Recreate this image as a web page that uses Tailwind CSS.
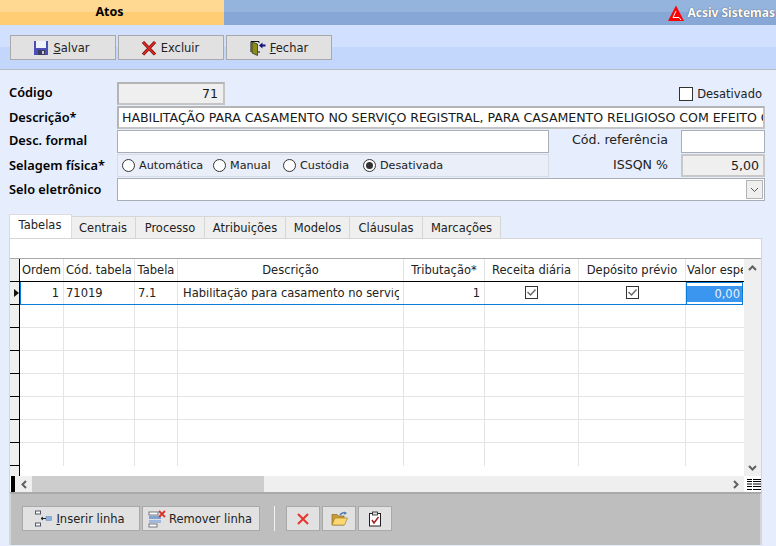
<!DOCTYPE html>
<html lang="pt"><head><meta charset="utf-8"><script src="https://cdn.jsdelivr.net/npm/@tailwindcss/browser@4"></script></head>
<body class="m-0 w-[776px] h-[546px] overflow-hidden bg-[#e6edfc] font-['DejaVu_Sans',sans-serif] text-[11.5px] leading-none text-[#1a1a1a]">
<!-- header -->
<div class="flex h-[25px]">
  <div class="w-[224px] h-full bg-[linear-gradient(#ffd992_0,#ffd992_12px,#ffcd74_12px)] flex items-center justify-center font-['Noto_Sans',sans-serif] font-bold text-[12.5px] text-black pr-[5px]">Atos</div>
  <div class="flex-1 h-full bg-[linear-gradient(#94b3dd_0,#94b3dd_12px,#87a7d7_12px)] flex items-center justify-end gap-[3px] pr-[1px]">
    <svg width="16" height="16" viewBox="0 0 16 16"><path d="M8 0.5 L16 16 L0 16 Z" fill="#f00"/><path d="M8 6 L5 12.5 L11 12.5 L13 15" fill="none" stroke="#fff" stroke-width="1"/></svg>
    <span class="font-['Noto_Sans',sans-serif] font-bold text-[12px] text-white [text-shadow:0_0_1px_#333]">Acsiv Sistemas</span>
  </div>
</div>
<!-- toolbar -->
<div class="h-[45px] border-b border-[#b7bcc6] bg-[linear-gradient(#d1e0fe_0,#d1e0fe_22px,#c3d6fc_22px)] flex gap-[2px] pl-[10px] pt-[10px]">
  <button class="w-[106px] h-[25px] border border-[#a9a9a9] bg-[#e1e1e1] flex items-center justify-center gap-[4px] text-[#222] pr-[3px]">
    <svg width="16" height="16" viewBox="0 0 16 16"><rect x="1" y="1" width="14" height="14" fill="#4d4db8"/><rect x="3" y="1" width="10" height="7" fill="#eef2fa"/><rect x="5" y="10" width="7" height="5" fill="#3a3a5a"/><rect x="9" y="11" width="2" height="3" fill="#c8c8d8"/></svg>
    <span class="pt-[2px]"><u>S</u>alvar</span>
  </button>
  <button class="w-[106px] h-[25px] border border-[#a9a9a9] bg-[#e1e1e1] flex items-center justify-center gap-[4px] text-[#222] pr-[2px]">
    <svg width="16" height="16" viewBox="0 0 16 16"><path d="M2 2 L14 14.5 M14 2 L2 14.5" stroke="#6b0f0f" stroke-width="3.2"/><path d="M2 2 L14 14.5 M14 2 L2 14.5" stroke="#e8281e" stroke-width="1.8"/></svg>
    <span class="pt-[2px]">Excluir</span>
  </button>
  <button class="w-[106px] h-[25px] border border-[#a9a9a9] bg-[#e1e1e1] flex items-center justify-center gap-[4px] text-[#222]">
    <svg width="16" height="16" viewBox="0 0 16 16"><path d="M1 1.5 H9 V3 M1 1.5 V12 M9 11 V13" fill="none" stroke="#111"/><path d="M2 2 L7.5 4 L7.5 15.5 L2 13 Z" fill="#8c8c18" stroke="#222" stroke-width=".7"/><path d="M15.5 4.5 H12.5 V2.5 L9 5.5 L12.5 8.5 V6.5 H15.5 Z" fill="#101080"/></svg>
    <span class="pt-[2px]"><u>F</u>echar</span>
  </button>
</div>
<!-- form -->
<div>
  <div class="flex h-[24px] mt-[12px] items-start">
    <div class="w-[117px] h-[21px] flex items-center pl-[9px] font-['Noto_Sans',sans-serif] font-semibold text-[12.8px] text-black">Código</div>
    <div class="w-[108px] h-[23px] border-2 border-[#b4b4b4] border-b-[#c4c4c4] border-r-[#c4c4c4] bg-[#efefef] flex items-center justify-end pr-[5px] pt-[2px] text-[12.6px]">71</div>
    <div class="ml-auto mr-[14px] mt-[5px] flex items-center gap-[4px] text-[#222]"><span class="w-[14px] h-[14px] border border-[#333] bg-white"></span><span class="pt-[2px]">Desativado</span></div>
  </div>
  <div class="flex h-[24px] items-start">
    <div class="w-[117px] h-[23px] flex items-center pl-[9px] font-['Noto_Sans',sans-serif] font-semibold text-[12.8px] text-black">Descrição*</div>
    <div class="w-[648px] h-[23px] border-2 border-[#b4b4b4] border-b-[#c4c4c4] border-r-[#c4c4c4] bg-white flex items-center pl-[3px] pr-[1px] pt-[2px] text-[12.6px] tracking-[-0.05px] overflow-hidden whitespace-nowrap">HABILITAÇÃO PARA CASAMENTO NO SERVIÇO REGISTRAL, PARA CASAMENTO RELIGIOSO COM EFEITO CIVIL</div>
  </div>
  <div class="flex h-[24px] items-start">
    <div class="w-[117px] h-[21px] flex items-center pl-[9px] font-['Noto_Sans',sans-serif] font-semibold text-[12.8px] text-black">Desc. formal</div>
    <div class="w-[432px] h-[23px] border border-[#a9adb5] bg-white"></div>
    <div class="w-[120px] h-[21px] flex items-center justify-end pr-[1px] text-[12.6px] text-[#222]">Cód. referência</div>
    <div class="w-[84px] h-[23px] border border-[#a9adb5] bg-white ml-[12px]"></div>
  </div>
  <div class="flex h-[24px] items-start">
    <div class="w-[117px] h-[23px] flex items-center pl-[9px] font-['Noto_Sans',sans-serif] font-semibold text-[12.8px] text-black">Selagem física*</div>
    <div class="w-[432px] h-[23px] border border-[#d6dbe4] bg-[#e9eef8] flex items-center pl-[4px] text-[11.2px] text-[#222]">
      <span class="flex items-center gap-[4px] w-[91px]"><span class="w-[13px] h-[13px] rounded-full border border-[#333] bg-white"></span>Automática</span>
      <span class="flex items-center gap-[4px] w-[70px]"><span class="w-[13px] h-[13px] rounded-full border border-[#333] bg-white"></span>Manual</span>
      <span class="flex items-center gap-[4px] w-[80px]"><span class="w-[13px] h-[13px] rounded-full border border-[#333] bg-white"></span>Custódia</span>
      <span class="flex items-center gap-[4px]"><span class="w-[13px] h-[13px] rounded-full border border-[#333] bg-white flex items-center justify-center"><span class="w-[7px] h-[7px] rounded-full bg-[#333]"></span></span>Desativada</span>
    </div>
    <div class="w-[120px] h-[23px] flex items-center justify-end pr-[1px] text-[12.6px] text-[#222]">ISSQN %</div>
    <div class="w-[84px] h-[23px] border-2 border-[#c8c8c8] bg-[#efefef] ml-[12px] flex items-center justify-end pr-[4px] pt-[1px] text-[12.6px]">5,00</div>
  </div>
  <div class="flex h-[24px] items-start">
    <div class="w-[117px] h-[23px] flex items-center pl-[9px] font-['Noto_Sans',sans-serif] font-semibold text-[12.8px] text-black">Selo eletrônico</div>
    <div class="w-[648px] h-[23px] border border-[#a9adb5] bg-white flex items-center justify-end pr-[1px]">
      <span class="w-[17px] h-[19px] border border-[#b4b4b4] bg-[#efefef] flex items-center justify-center"><svg width="9" height="6" viewBox="0 0 9 6"><path d="M1 1 L4.5 4.5 L8 1" fill="none" stroke="#555"/></svg></span>
    </div>
  </div>
</div>
<!-- tabs -->
<div class="flex items-end h-[24px] mt-[12px] pl-[9px] text-[#222]">
  <div class="w-[63px] h-[24px] bg-white border border-b-0 border-[#dcdcdc] flex items-center justify-center pb-[2px] pr-[1px]">Tabelas</div>
  <div class="w-[64px] h-[22px] bg-[#efefef] border border-b-0 border-l-0 border-[#d6d6d6] flex items-center justify-center pt-[2px] pr-[1px]">Centrais</div>
  <div class="w-[69px] h-[22px] bg-[#efefef] border border-b-0 border-l-0 border-[#d6d6d6] flex items-center justify-center pt-[2px]">Processo</div>
  <div class="w-[81px] h-[22px] bg-[#efefef] border border-b-0 border-l-0 border-[#d6d6d6] flex items-center justify-center pt-[2px]">Atribuições</div>
  <div class="w-[64px] h-[22px] bg-[#efefef] border border-b-0 border-l-0 border-[#d6d6d6] flex items-center justify-center pt-[2px]">Modelos</div>
  <div class="w-[73px] h-[22px] bg-[#efefef] border border-b-0 border-l-0 border-[#d6d6d6] flex items-center justify-center pt-[2px]">Cláusulas</div>
  <div class="w-[78px] h-[22px] bg-[#efefef] border border-b-0 border-l-0 border-[#d6d6d6] flex items-center justify-center pt-[2px]">Marcações</div>
</div>
<!-- panel -->
<div class="ml-[9px] w-[753px] h-[254px] border-t border-x border-[#d6d6d6] bg-white flex flex-col text-[#222]">
  <div class="h-[20px] shrink-0 border-b border-[#a9a9a9]"></div>
  <div class="flex h-[217px] shrink-0">
    <!-- indicator column -->
    <div class="w-[10px] shrink-0 border-r border-black bg-[#efefef] flex flex-col overflow-hidden">
      <div class="h-[23px] border-b border-black shrink-0"></div>
      <div class="h-[23px] border-b border-black shrink-0 flex items-center pl-[3px]"><svg width="6" height="8" viewBox="0 0 6 8"><path d="M1 0 L6 4 L1 8 Z" fill="#111"/></svg></div>
      <div class="h-[23px] border-b border-black shrink-0"></div><div class="h-[23px] border-b border-black shrink-0"></div><div class="h-[23px] border-b border-black shrink-0"></div><div class="h-[23px] border-b border-black shrink-0"></div><div class="h-[23px] border-b border-black shrink-0"></div><div class="h-[23px] border-b border-black shrink-0"></div><div class="h-[23px] border-b border-black shrink-0"></div>
    </div>
    <!-- grid -->
    <div class="w-[724px] overflow-hidden">
      <div class="flex h-[23px] border-b border-black w-[724px]">
        <div class="w-[44px] border-r border-[#e4e4e4] flex items-center justify-center whitespace-nowrap pt-[2px]">Ordem</div>
        <div class="w-[71px] border-r border-[#e4e4e4] flex items-center justify-center whitespace-nowrap pt-[2px]">Cód. tabela</div>
        <div class="w-[43px] border-r border-[#e4e4e4] flex items-center justify-center pt-[2px]">Tabela</div>
        <div class="w-[226px] border-r border-[#e4e4e4] flex items-center justify-center pt-[2px]">Descrição</div>
        <div class="w-[81px] border-r border-[#e4e4e4] flex items-center justify-center pt-[2px]">Tributação*</div>
        <div class="w-[94px] border-r border-[#e4e4e4] flex items-center justify-center pt-[2px]">Receita diária</div>
        <div class="w-[107px] border-r border-[#e4e4e4] flex items-center justify-center pt-[2px]">Depósito prévio</div>
        <div class="w-[57px] flex items-center overflow-hidden whitespace-nowrap pl-[1px] pt-[2px]">Valor especial</div>
      </div>
      <div class="flex h-[23px] border-b border-[#0a7cd8] w-[723px]">
        <div class="w-[44px] border-r border-r-[#e4e4e4] border-l border-l-[#0a7cd8] flex items-center justify-end pr-[4px] pt-[2px]">1</div>
        <div class="w-[71px] border-r border-[#e4e4e4] flex items-center pl-[2px] pt-[2px]">71019</div>
        <div class="w-[43px] border-r border-[#e4e4e4] flex items-center pl-[3px] pt-[2px]">7.1</div>
        <div class="w-[226px] border-r border-[#e4e4e4] flex items-center pl-[5px] pt-[2px]"><span class="block w-[216px] overflow-hidden whitespace-nowrap">Habilitação para casamento no serviço</span></div>
        <div class="w-[81px] border-r border-[#e4e4e4] flex items-center justify-end pr-[4px] pt-[2px]">1</div>
        <div class="w-[94px] border-r border-[#e4e4e4] flex items-center justify-center pb-[1px]"><svg width="13" height="13" viewBox="0 0 13 13"><rect x=".5" y=".5" width="12" height="12" fill="#fff" stroke="#333"/><path d="M2.5 6 L5.5 9 L10.5 3.5" fill="none" stroke="#666" stroke-width="1.4"/></svg></div>
        <div class="w-[107px] border-r border-[#e4e4e4] flex items-center justify-center pb-[1px]"><svg width="13" height="13" viewBox="0 0 13 13"><rect x=".5" y=".5" width="12" height="12" fill="#fff" stroke="#333"/><path d="M2.5 6 L5.5 9 L10.5 3.5" fill="none" stroke="#666" stroke-width="1.4"/></svg></div>
        <div class="w-[57px] border border-[#0a7cd8] border-b-0 flex items-center py-[1px]"><div class="w-full h-[16px] bg-[#3a96ee] text-[#e8f2ff] flex items-center justify-end pr-[2px] pt-[2px]">0,00</div></div>
      </div>
      <div class="flex h-[23px] border-b border-[#e4e4e4] w-[724px]"><div class="w-[44px] border-r border-[#e4e4e4]"></div><div class="w-[71px] border-r border-[#e4e4e4]"></div><div class="w-[43px] border-r border-[#e4e4e4]"></div><div class="w-[226px] border-r border-[#e4e4e4]"></div><div class="w-[81px] border-r border-[#e4e4e4]"></div><div class="w-[94px] border-r border-[#e4e4e4]"></div><div class="w-[107px] border-r border-[#e4e4e4]"></div></div>
      <div class="flex h-[23px] border-b border-[#e4e4e4] w-[724px]"><div class="w-[44px] border-r border-[#e4e4e4]"></div><div class="w-[71px] border-r border-[#e4e4e4]"></div><div class="w-[43px] border-r border-[#e4e4e4]"></div><div class="w-[226px] border-r border-[#e4e4e4]"></div><div class="w-[81px] border-r border-[#e4e4e4]"></div><div class="w-[94px] border-r border-[#e4e4e4]"></div><div class="w-[107px] border-r border-[#e4e4e4]"></div></div>
      <div class="flex h-[23px] border-b border-[#e4e4e4] w-[724px]"><div class="w-[44px] border-r border-[#e4e4e4]"></div><div class="w-[71px] border-r border-[#e4e4e4]"></div><div class="w-[43px] border-r border-[#e4e4e4]"></div><div class="w-[226px] border-r border-[#e4e4e4]"></div><div class="w-[81px] border-r border-[#e4e4e4]"></div><div class="w-[94px] border-r border-[#e4e4e4]"></div><div class="w-[107px] border-r border-[#e4e4e4]"></div></div>
      <div class="flex h-[23px] border-b border-[#e4e4e4] w-[724px]"><div class="w-[44px] border-r border-[#e4e4e4]"></div><div class="w-[71px] border-r border-[#e4e4e4]"></div><div class="w-[43px] border-r border-[#e4e4e4]"></div><div class="w-[226px] border-r border-[#e4e4e4]"></div><div class="w-[81px] border-r border-[#e4e4e4]"></div><div class="w-[94px] border-r border-[#e4e4e4]"></div><div class="w-[107px] border-r border-[#e4e4e4]"></div></div>
      <div class="flex h-[23px] border-b border-[#e4e4e4] w-[724px]"><div class="w-[44px] border-r border-[#e4e4e4]"></div><div class="w-[71px] border-r border-[#e4e4e4]"></div><div class="w-[43px] border-r border-[#e4e4e4]"></div><div class="w-[226px] border-r border-[#e4e4e4]"></div><div class="w-[81px] border-r border-[#e4e4e4]"></div><div class="w-[94px] border-r border-[#e4e4e4]"></div><div class="w-[107px] border-r border-[#e4e4e4]"></div></div>
      <div class="flex h-[23px] border-b border-[#e4e4e4] w-[724px]"><div class="w-[44px] border-r border-[#e4e4e4]"></div><div class="w-[71px] border-r border-[#e4e4e4]"></div><div class="w-[43px] border-r border-[#e4e4e4]"></div><div class="w-[226px] border-r border-[#e4e4e4]"></div><div class="w-[81px] border-r border-[#e4e4e4]"></div><div class="w-[94px] border-r border-[#e4e4e4]"></div><div class="w-[107px] border-r border-[#e4e4e4]"></div></div>
      <div class="flex h-[23px] w-[724px]"><div class="w-[44px] border-r border-[#e4e4e4]"></div><div class="w-[71px] border-r border-[#e4e4e4]"></div><div class="w-[43px] border-r border-[#e4e4e4]"></div><div class="w-[226px] border-r border-[#e4e4e4]"></div><div class="w-[81px] border-r border-[#e4e4e4]"></div><div class="w-[94px] border-r border-[#e4e4e4]"></div><div class="w-[107px] border-r border-[#e4e4e4]"></div></div>
    </div>
    <!-- v scrollbar -->
    <div class="w-[17px] bg-[#efefef] flex flex-col justify-between items-center pt-[6px] pb-[5px]">
      <svg width="9" height="6" viewBox="0 0 9 6"><path d="M1 5 L4.5 1.5 L8 5" fill="none" stroke="#606060" stroke-width="2"/></svg>
      <svg width="9" height="6" viewBox="0 0 9 6"><path d="M1 1 L4.5 4.5 L8 1" fill="none" stroke="#606060" stroke-width="2"/></svg>
    </div>
  </div>
  <!-- h scrollbar -->
  <div class="flex h-[16px] shrink-0">
    <div class="w-[4px] ml-[1px] bg-black"></div>
    <div class="w-[17px] bg-[#efefef] flex items-center justify-center"><svg width="6" height="9" viewBox="0 0 6 9"><path d="M5 1 L1.5 4.5 L5 8" fill="none" stroke="#606060" stroke-width="2"/></svg></div>
    <div class="w-[232px] bg-[#cdcdcd]"></div>
    <div class="w-[480px] bg-[#efefef] flex items-center justify-end pr-[5px]"><svg width="6" height="9" viewBox="0 0 6 9"><path d="M1 1 L4.5 4.5 L1 8" fill="none" stroke="#606060" stroke-width="2"/></svg></div>
    <div class="w-[17px] flex items-center justify-center pl-[2px]"><svg width="14" height="11" viewBox="0 0 14 11"><path d="M0 .5 H5 M6 .5 H14 M0 2.5 H5 M6 2.5 H14 M0 5 H5 M6 5 H14 M0 7.5 H5 M6 7.5 H14 M0 10.5 H5 M6 10.5 H14" stroke="#000" stroke-width="1.2"/></svg></div>
  </div>
</div>
<!-- bottom bar -->
<div class="ml-[9px] w-[753px] h-[53px] border-x-2 border-[#d6d6d6] border-t-2 border-t-[#a9a9a9] bg-[#bebebe] flex items-start pt-[12px] pl-[11px] text-[#222]">
  <button class="w-[118px] h-[25px] border border-[#a9a9a9] bg-[#e1e1e1] flex items-center justify-center gap-[4px] pr-[2px]">
    <svg width="17" height="17" viewBox="0 0 17 17"><rect x=".5" y="1" width="5" height="3" fill="#fff" stroke="#556"/><rect x=".5" y="13" width="5" height="3" fill="#fff" stroke="#556"/><rect x="11" y="6.5" width="5.5" height="4" fill="#8db1df" stroke="#6d8fbf" stroke-width=".6"/><path d="M6 8.5 H11 M6 8.5 L8 7 M6 8.5 L8 10" stroke="#222" fill="none"/></svg>
    <span class="pt-[2px]"><u>I</u>nserir linha</span>
  </button>
  <button class="w-[118px] h-[25px] ml-[2px] border border-[#a9a9a9] bg-[#e1e1e1] flex items-center justify-center gap-[3px] pr-[2px]">
    <svg width="18" height="18" viewBox="0 0 18 18"><rect x="1" y="2" width="9" height="3" fill="#fff" stroke="#778"/><rect x="1" y="6" width="12" height="3" fill="#7fa4d4"/><rect x="1" y="10" width="12" height="3" fill="#9fb8dc"/><rect x="1" y="14" width="8" height="3" fill="#fff" stroke="#778"/><path d="M11 1 L17 7 M17 1 L11 7" stroke="#d8322a" stroke-width="1.8"/></svg>
    <span class="pt-[2px]">Remover linha</span>
  </button>
  <div class="w-[1px] h-[25px] ml-[14px] mr-[11px] bg-[#f2f2f2]"></div>
  <button class="w-[34px] h-[25px] border border-[#a9a9a9] bg-[#e1e1e1] flex items-center justify-center">
    <svg width="12" height="12" viewBox="0 0 12 12"><path d="M1 1 L11 11 M11 1 L1 11" stroke="#e8352a" stroke-width="2"/></svg>
  </button>
  <button class="w-[34px] h-[25px] ml-[2px] border border-[#a9a9a9] bg-[#e1e1e1] flex items-center justify-center">
    <svg width="17" height="16" viewBox="0 0 17 16"><path d="M1 3.5 H6 L7.5 5 H13 V14 H1 Z" fill="#c89a3a" stroke="#8a6a20" stroke-width=".7"/><path d="M1 14 L4 7 H16.5 L13.5 14 Z" fill="#fbd873" stroke="#a8842c" stroke-width=".7"/><path d="M9 4 Q11 1 14 2" fill="none" stroke="#4c78b0" stroke-width="1.4"/><path d="M13 0.5 L16 2 L13.5 4 Z" fill="#4c78b0"/></svg>
  </button>
  <button class="w-[34px] h-[25px] ml-[2px] border border-[#a9a9a9] bg-[#e1e1e1] flex items-center justify-center">
    <svg width="14" height="16" viewBox="0 0 14 16"><rect x="1.5" y="2.5" width="11" height="12.5" fill="#fff" stroke="#222"/><rect x="4.5" y="1" width="5" height="3" fill="#ddd" stroke="#222" stroke-width=".8"/><path d="M4 9 L6 12 L10.5 6" fill="none" stroke="#a01818" stroke-width="1.4"/></svg>
  </button>
</div>
</body></html>
